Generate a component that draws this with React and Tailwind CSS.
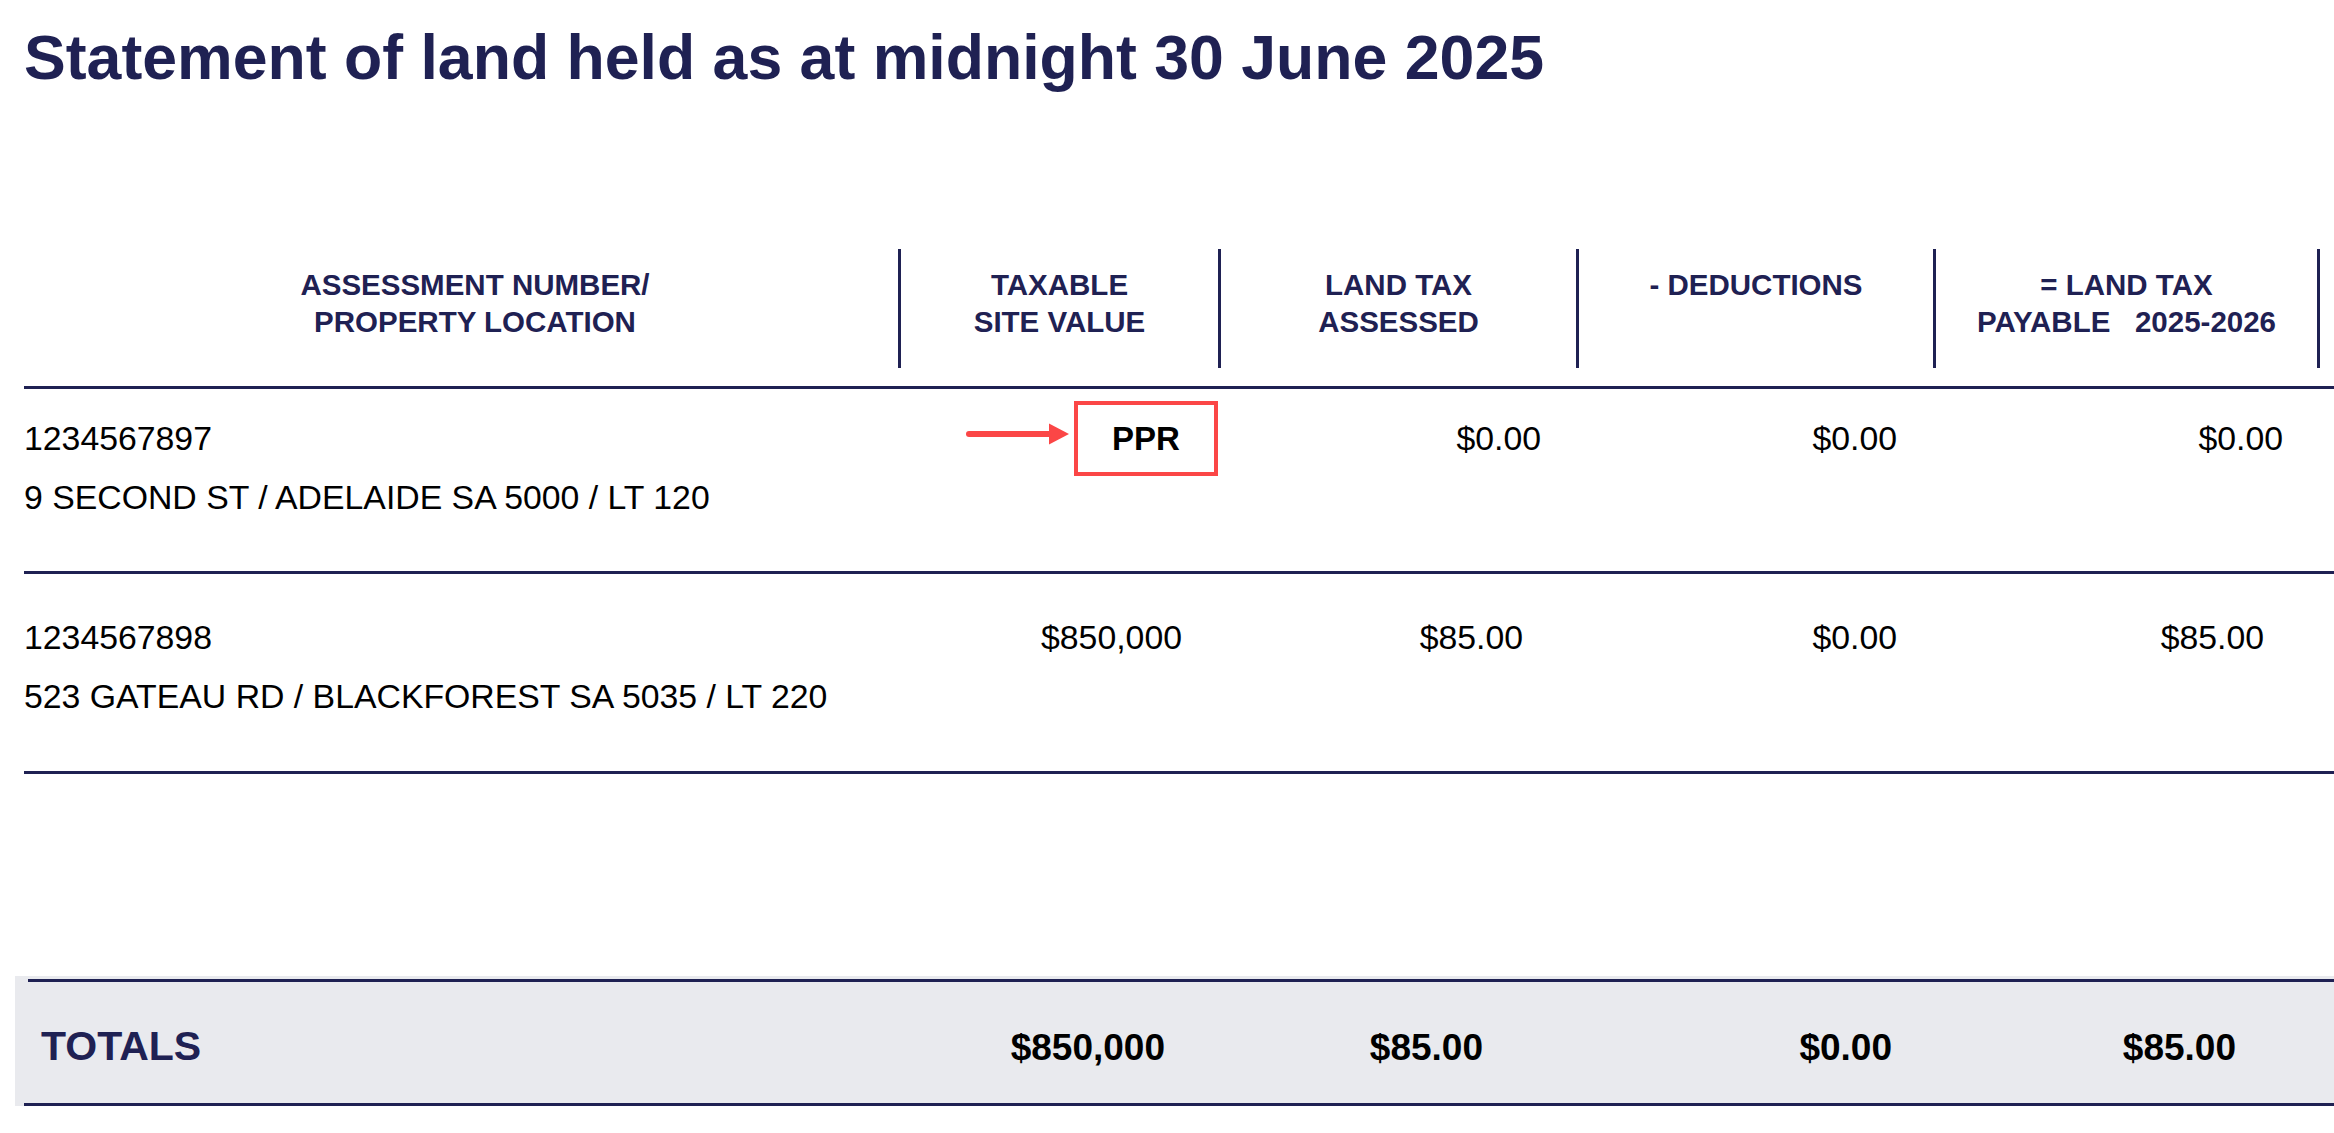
const cols = "grid grid-cols-[874px_320px_358px_357px_387px]";

const rows = [
  {
    number: "1234567897",
    address: "9 SECOND ST / ADELAIDE SA 5000 / LT 120",
    ppr: true,
    assessed: "$0.00",
    deductions: "$0.00",
    payable: "$0.00",
  },
  {
    number: "1234567898",
    address: "523 GATEAU RD / BLACKFOREST SA 5035 / LT 220",
    siteValue: "$850,000",
    assessed: "$85.00",
    deductions: "$0.00",
    payable: "$85.00",
  },
];

const Arrow = () => (
  <svg width="104" height="24" viewBox="0 0 104 24" className="mt-[21px] mr-[5px] shrink-0">
    <line x1="4" y1="12" x2="86" y2="12" stroke="#fb4646" strokeWidth="6" strokeLinecap="round" />
    <polygon points="84,1.5 104,12 84,22.5" fill="#fb4646" />
  </svg>
);

const App = () => {
  return (
    <div className="w-[2334px] h-[1133px] overflow-hidden bg-white font-['Liberation_Sans',Arial,sans-serif]">
      {/* Title */}
      <h1 className="pl-[24px] pt-[26px] text-[62.6px] leading-none font-bold text-[#1f2153]">
        Statement of land held as at midnight 30 June 2025
      </h1>

      {/* Header */}
      <div className={`ml-[24px] mt-[160px] ${cols} text-center text-[29.5px] leading-[37px] font-bold text-[#1f2153]`}>
        <div className="h-[119px] pt-[17px] pl-[28px]">
          ASSESSMENT NUMBER/
          <br />
          PROPERTY LOCATION
        </div>
        <div className="h-[119px] pt-[17px] border-l-[3px] border-[#1f2153]">
          TAXABLE
          <br />
          SITE VALUE
        </div>
        <div className="h-[119px] pt-[17px] border-l-[3px] border-[#1f2153]">
          LAND TAX
          <br />
          ASSESSED
        </div>
        <div className="h-[119px] pt-[17px] border-l-[3px] border-[#1f2153]">- DEDUCTIONS</div>
        <div className="h-[119px] pt-[17px] border-x-[3px] border-[#1f2153]">
          = LAND TAX
          <br />
          <span className="whitespace-pre">PAYABLE   2025-2026</span>
        </div>
      </div>
      <div className="ml-[24px] mt-[18px] h-[3px] bg-[#1f2153]" />

      {/* Rows */}
      {rows.map((row, i) => (
        <div key={row.number}>
          <div
            className={`ml-[24px] ${cols} text-[33.8px] leading-[59px] text-black ${
              i === 0 ? "h-[182px]" : "h-[197px]"
            }`}
          >
            <div className={i === 0 ? "pt-[20px]" : "pt-[34px]"}>
              {row.number}
              <br />
              {row.address}
            </div>

            {row.ppr ? (
              <div className="pt-[12px] flex justify-end items-start">
                <Arrow />
                <div className="w-[144px] h-[75px] border-4 border-[#fb4646] flex items-center justify-center text-[33px] font-bold leading-none">
                  PPR
                </div>
              </div>
            ) : (
              <div className={`text-right pr-[36px] ${i === 0 ? "pt-[20px]" : "pt-[34px]"}`}>{row.siteValue}</div>
            )}

            <div className={`text-right ${i === 0 ? "pt-[20px] pr-[35px]" : "pt-[34px] pr-[53px]"}`}>{row.assessed}</div>
            <div className={`text-right pr-[36px] ${i === 0 ? "pt-[20px]" : "pt-[34px]"}`}>{row.deductions}</div>
            <div className={`text-right ${i === 0 ? "pt-[20px] pr-[37px]" : "pt-[34px] pr-[56px]"}`}>{row.payable}</div>
          </div>
          <div className="ml-[24px] h-[3px] bg-[#1f2153]" />
        </div>
      ))}

      {/* Totals */}
      <div className="ml-[15px] mt-[202px] h-[130px] bg-[#e9eaee] pt-[3px] flex flex-col">
        <div className="ml-[13px] h-[3px] bg-[#1f2153]" />
        <div className={`flex-1 pl-[9px] ${cols} items-baseline pt-[44px] font-bold leading-none`}>
          <div className="pl-[17px] text-[41px] text-[#1f2153]">TOTALS</div>
          <div className="text-right pr-[53px] text-[37px] text-black">$850,000</div>
          <div className="text-right pr-[93px] text-[37px] text-black">$85.00</div>
          <div className="text-right pr-[41px] text-[37px] text-black">$0.00</div>
          <div className="text-right pr-[84px] text-[37px] text-black">$85.00</div>
        </div>
        <div className="ml-[9px] h-[3px] bg-[#1f2153]" />
      </div>
    </div>
  );
};

export default App;
